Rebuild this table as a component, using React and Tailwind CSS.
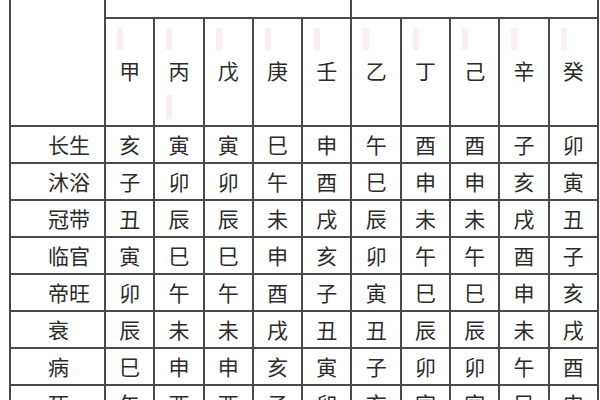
import React from 'react';

const stems = ['甲', '丙', '戊', '庚', '壬', '乙', '丁', '己', '辛', '癸'];

const rows = [
    ['长生', ['亥', '寅', '寅', '巳', '申', '午', '酉', '酉', '子', '卯']],
    ['沐浴', ['子', '卯', '卯', '午', '酉', '巳', '申', '申', '亥', '寅']],
    ['冠带', ['丑', '辰', '辰', '未', '戌', '辰', '未', '未', '戌', '丑']],
    ['临官', ['寅', '巳', '巳', '申', '亥', '卯', '午', '午', '酉', '子']],
    ['帝旺', ['卯', '午', '午', '酉', '子', '寅', '巳', '巳', '申', '亥']],
    ['衰', ['辰', '未', '未', '戌', '丑', '丑', '辰', '辰', '未', '戌']],
    ['病', ['巳', '申', '申', '亥', '寅', '子', '卯', '卯', '午', '酉']],
    ['死', ['午', '酉', '酉', '子', '卯', '亥', '寅', '寅', '巳', '申']],
];

const cell = 'border-2 border-[#4a4a4a] text-center align-middle p-0';

function App() {
    return (
        <div className="w-[600px] h-[400px] overflow-hidden bg-white pl-[9px] font-['Noto_Sans_CJK_SC','Noto_Sans',sans-serif] text-[#2b2b2b]">
            <table className="table-fixed border-collapse w-[590px] -mt-[2px]">
                <colgroup>
                    <col className="w-[95px]" />
                    {stems.map((s) => (
                        <col key={s} />
                    ))}
                </colgroup>
                <tbody>
                    <tr className="h-[19px]">
                        <td rowSpan={2} className={cell} />
                        <td colSpan={5} className={cell} />
                        <td colSpan={5} className={cell} />
                    </tr>
                    <tr className="h-[108px]">
                        {stems.map((s, i) => (
                            <td key={s} className={cell + ' relative'}>
                                {/* faint pink marks from the scan */}
                                <span className="absolute left-[11px] top-[9px] w-[6px] h-[22px] bg-[#faeff4]" />
                                {i === 1 && <span className="absolute left-[11px] bottom-[6px] w-[6px] h-[24px] bg-[#faeff4]" />}
                                <span className="text-[21px] leading-none">{s}</span>
                            </td>
                        ))}
                    </tr>
                    {rows.map(([label, vals]) => (
                        <tr key={label} className="h-[37px]">
                            <td className={cell + ' text-left pl-[37px] text-[21px] leading-none'}>{label}</td>
                            {vals.map((v, i) => (
                                <td key={i} className={cell + ' text-[21px] leading-none'}>
                                    {v}
                                </td>
                            ))}
                        </tr>
                    ))}
                </tbody>
            </table>
        </div>
    );
}

export default App;
